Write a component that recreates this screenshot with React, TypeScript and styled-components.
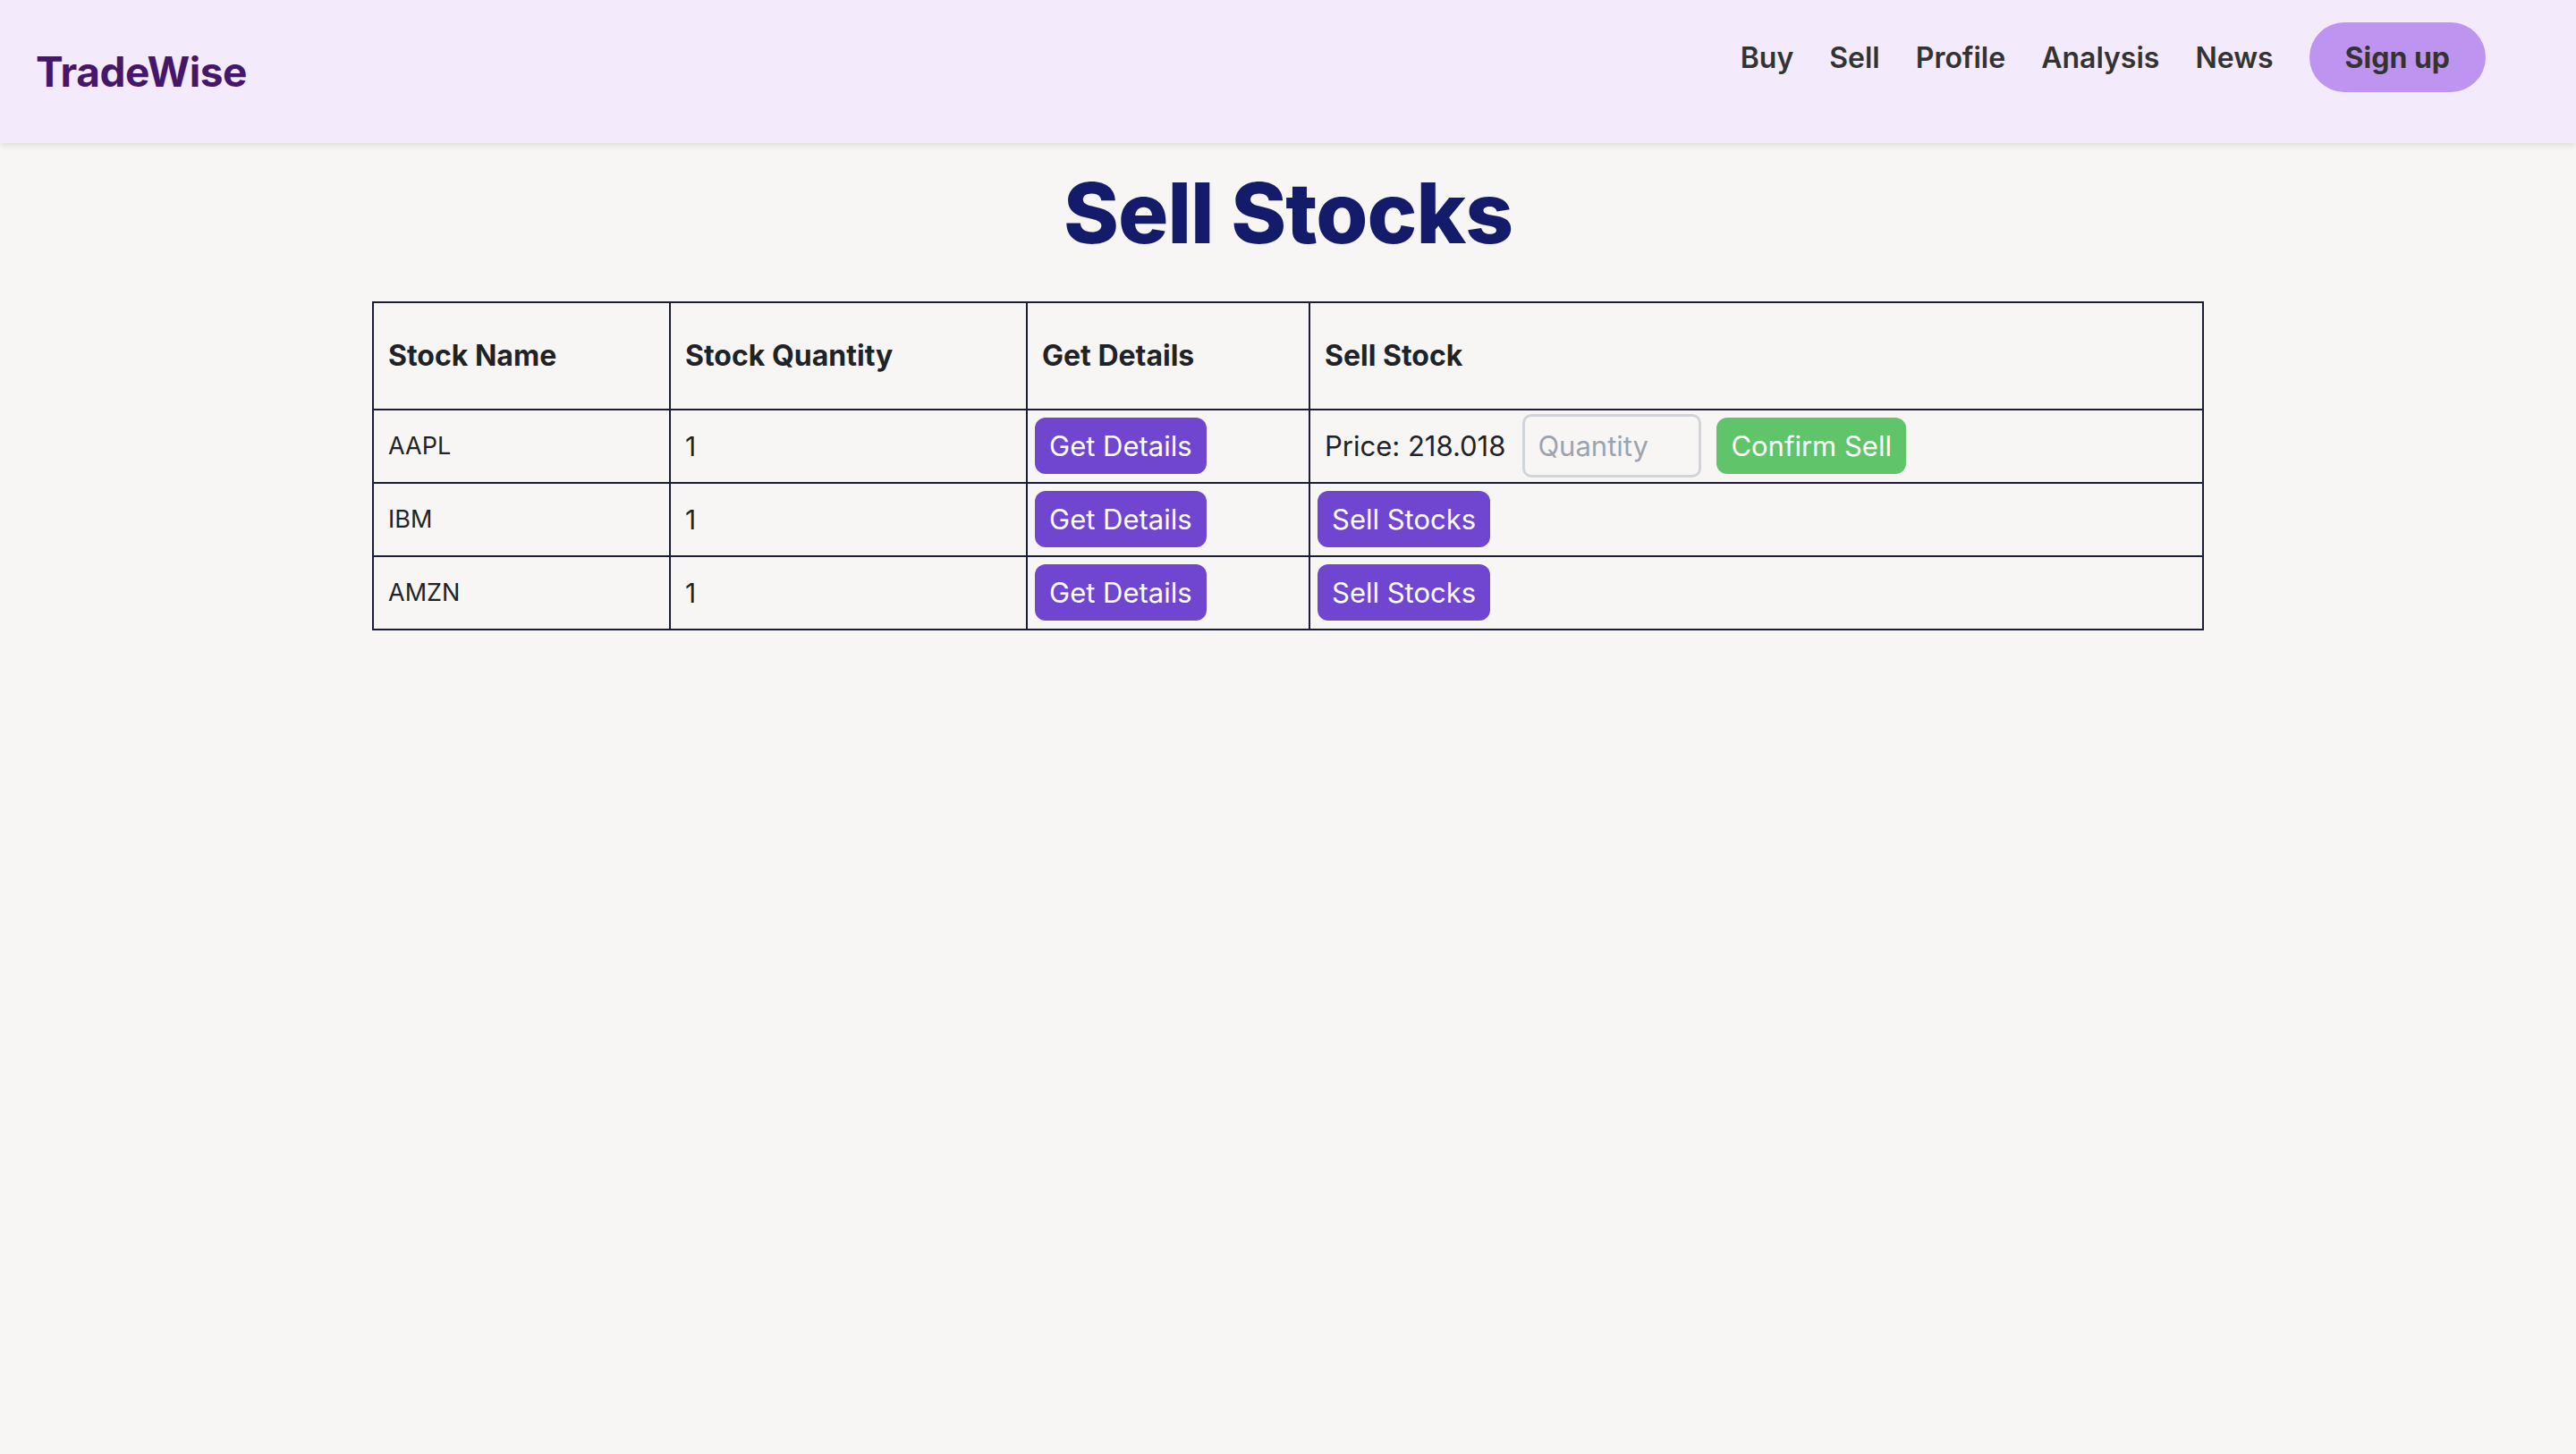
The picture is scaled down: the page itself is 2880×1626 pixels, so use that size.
import React from "react";
import styled, { createGlobalStyle } from "styled-components";

const GlobalStyle = createGlobalStyle`
  html, body {
    margin: 0;
    padding: 0;
    background: #f7f6f4;
    font-family: Inter, "Noto Sans", "Liberation Sans", sans-serif;
    color: #1f2328;
  }
  * { box-sizing: border-box; }
`;

const Header = styled.header`
  height: 160px;
  display: flex;
  align-items: center;
  justify-content: space-between;
  padding: 0 101px 0 40px;
  background: #f3eafb;
  box-shadow: 0 2px 8px rgba(0, 0, 0, 0.12);
`;

const Logo = styled.div`
  font-size: 46px;
  font-weight: 700;
  color: #45176a;
  letter-spacing: -0.5px;
`;

const Nav = styled.nav`
  display: flex;
  align-items: center;
  gap: 40px;
  margin-bottom: 32px;
`;

const NavLink = styled.a`
  font-size: 32px;
  font-weight: 600;
  color: #333333;
  text-decoration: none;
  cursor: pointer;
`;

const SignUp = styled.button`
  font-family: inherit;
  font-size: 32px;
  font-weight: 700;
  color: #333333;
  background: #bd94f0;
  border: none;
  border-radius: 999px;
  height: 78px;
  padding: 0 40px;
  cursor: pointer;
`;

const Main = styled.main`
  display: flex;
  flex-direction: column;
  align-items: center;
`;

const Title = styled.h1`
  margin: 22px 0 42px;
  font-size: 94px;
  line-height: 1.2;
  font-weight: 800;
  color: #141b6a;
  letter-spacing: -1px;
`;

const Table = styled.table`
  width: 2046px;
  table-layout: fixed;
  border-collapse: collapse;
  border: 2px solid #1a1d33;
`;

const Th = styled.th`
  height: 120px;
  padding: 0 16px;
  border: 2px solid #1a1d33;
  text-align: left;
  font-size: 32px;
  font-weight: 700;
  color: #1f2328;
`;

const Td = styled.td<{ $tight?: boolean; $size?: number }>`
  height: 82px;
  padding: 0 ${(p) => (p.$tight ? "8px" : "16px")};
  border: 2px solid #1a1d33;
  vertical-align: middle;
  font-size: ${(p) => p.$size ?? 30}px;
  color: #1f2328;
`;

const SellArea = styled.div`
  display: flex;
  align-items: center;
  gap: 17px;
`;

const Price = styled.span`
  font-size: 31px;
  padding-left: 8px;
  margin-right: 2px;
`;

const Button = styled.button<{ $variant?: "purple" | "green" }>`
  font-family: inherit;
  font-size: 31px;
  font-weight: 400;
  color: #ffffff;
  background: ${(p) => (p.$variant === "green" ? "#5fc46a" : "#7046d1")};
  border: none;
  border-radius: 12px;
  height: 63px;
  padding: 0 16px;
  cursor: pointer;
`;

const QtyInput = styled.input`
  width: 200px;
  height: 71px;
  font-family: inherit;
  font-size: 31px;
  padding: 0 14px;
  border: 3px solid #d1d5db;
  border-radius: 10px;
  background: #f7f6f4;
  color: #1f2328;
  outline: none;
  &::placeholder {
    color: #9ca3af;
  }
`;

const stocks = [
  { name: "AAPL", qty: 1, active: true },
  { name: "IBM", qty: 1, active: false },
  { name: "AMZN", qty: 1, active: false },
];

export default function App() {
  return (
    <>
      <GlobalStyle />
      <Header>
        <Logo>TradeWise</Logo>
        <Nav>
          <NavLink>Buy</NavLink>
          <NavLink>Sell</NavLink>
          <NavLink>Profile</NavLink>
          <NavLink>Analysis</NavLink>
          <NavLink>News</NavLink>
          <SignUp>Sign up</SignUp>
        </Nav>
      </Header>
      <Main>
        <Title>Sell Stocks</Title>
        <Table>
          <colgroup>
            <col style={{ width: 332 }} />
            <col style={{ width: 399 }} />
            <col style={{ width: 316 }} />
            <col style={{ width: 999 }} />
          </colgroup>
          <thead>
            <tr>
              <Th>Stock Name</Th>
              <Th>Stock Quantity</Th>
              <Th>Get Details</Th>
              <Th>Sell Stock</Th>
            </tr>
          </thead>
          <tbody>
            {stocks.map((s) => (
              <tr key={s.name}>
                <Td $size={27}>{s.name}</Td>
                <Td>{s.qty}</Td>
                <Td $tight>
                  <Button>Get Details</Button>
                </Td>
                <Td $tight>
                  {s.active ? (
                    <SellArea>
                      <Price>Price: 218.018</Price>
                      <QtyInput placeholder="Quantity" />
                      <Button $variant="green">Confirm Sell</Button>
                    </SellArea>
                  ) : (
                    <Button>Sell Stocks</Button>
                  )}
                </Td>
              </tr>
            ))}
          </tbody>
        </Table>
      </Main>
    </>
  );
}
